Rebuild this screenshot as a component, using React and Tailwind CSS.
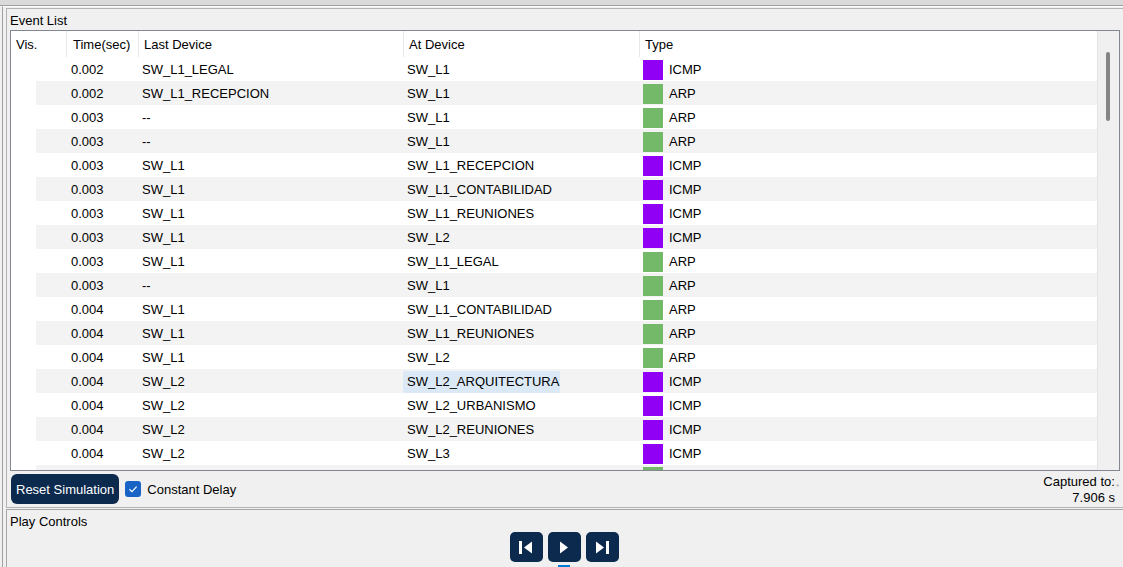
import React from "react";

const rows = [
  ["0.002", "SW_L1_LEGAL", "SW_L1", "ICMP"],
  ["0.002", "SW_L1_RECEPCION", "SW_L1", "ARP"],
  ["0.003", "--", "SW_L1", "ARP"],
  ["0.003", "--", "SW_L1", "ARP"],
  ["0.003", "SW_L1", "SW_L1_RECEPCION", "ICMP"],
  ["0.003", "SW_L1", "SW_L1_CONTABILIDAD", "ICMP"],
  ["0.003", "SW_L1", "SW_L1_REUNIONES", "ICMP"],
  ["0.003", "SW_L1", "SW_L2", "ICMP"],
  ["0.003", "SW_L1", "SW_L1_LEGAL", "ARP"],
  ["0.003", "--", "SW_L1", "ARP"],
  ["0.004", "SW_L1", "SW_L1_CONTABILIDAD", "ARP"],
  ["0.004", "SW_L1", "SW_L1_REUNIONES", "ARP"],
  ["0.004", "SW_L1", "SW_L2", "ARP"],
  ["0.004", "SW_L2", "SW_L2_ARQUITECTURA", "ICMP", true],
  ["0.004", "SW_L2", "SW_L2_URBANISMO", "ICMP"],
  ["0.004", "SW_L2", "SW_L2_REUNIONES", "ICMP"],
  ["0.004", "SW_L2", "SW_L3", "ICMP"],
];

function Row({ r, i }) {
  const [time, last, at, type, hl] = r;
  const striped = i % 2 === 1;
  return (
    <div className="flex h-[24px] shrink-0">
      <div className="w-[25px] h-full bg-white shrink-0" />
      <div className={`flex flex-1 h-full pt-[2px] items-center ${striped ? "bg-[#f3f3f3]" : "bg-white"}`}>
        <div className="w-[30px] shrink-0" />
        <div className="w-[72px] shrink-0 pl-[5px]">{time}</div>
        <div className="w-[265px] shrink-0 pl-[4px]">{last}</div>
        <div className="w-[236px] shrink-0 h-full flex items-center">
          {hl ? (
            <span className="h-[22px] -mt-[1px] pt-[1px] flex items-center pl-[4px] pr-[1px] bg-[#dbe8f5] rounded-[2px]">{at}</span>
          ) : (
            <span className="pl-[4px]">{at}</span>
          )}
        </div>
        <div className="flex-1 flex items-center pl-[4px]">
          <div className={`w-[20px] h-[20px] -mt-[1px] shrink-0 ${type === "ICMP" ? "bg-[#8f00f5]" : "bg-[#74b969]"}`} />
          <span className="ml-[6px]">{type}</span>
        </div>
      </div>
    </div>
  );
}

function CtrlButton({ children }) {
  return (
    <div className="w-[33px] h-[30px] bg-[#0c2a4e] rounded-[5px] flex items-center justify-center">
      {children}
    </div>
  );
}

export default function App() {
  return (
    <div className="w-[1123px] h-[567px] overflow-hidden bg-[#f0f0f0] flex flex-col text-[13px] leading-[16px] text-black font-['Liberation_Sans',Arial,sans-serif]">
      <div className="h-[6px] shrink-0 bg-[#dadada] border-b border-[#a0a0a0]" />
      <div className="flex-1 flex flex-col ml-[2px] border-l border-[#a0a0a0] border-t border-t-[#fbfbfb]">
        {/* Event List panel */}
        <div className="mt-[1px] ml-[3px] flex flex-col border-l border-t border-b border-[#b4b4b4] h-[500px]">
          <div className="h-[21px] pl-[3px] pt-[2px] flex items-center">Event List</div>
          <div className="ml-[3px] mr-[3px] h-[441px] border border-[#828790] bg-white flex">
            <div className="flex-1 flex flex-col overflow-hidden">
              <div className="h-[26px] flex items-center bg-white shrink-0">
                <div className="w-[55px] pl-[5px] pt-[2px] shrink-0">Vis.</div>
                <div className="w-[72px] h-full flex items-center pt-[2px] pl-[6px] border-l border-[#e8e8e8] shrink-0">Time(sec)</div>
                <div className="w-[265px] h-full flex items-center pt-[2px] pl-[5px] border-l border-[#e8e8e8] shrink-0">Last Device</div>
                <div className="w-[236px] h-full flex items-center pt-[2px] pl-[5px] border-l border-[#e8e8e8] shrink-0">At Device</div>
                <div className="flex-1 h-full flex items-center pt-[2px] pl-[5px] border-l border-[#e8e8e8]">Type</div>
              </div>
              {rows.map((r, i) => (
                <Row key={i} r={r} i={i} />
              ))}
              <div className="flex h-[6px] shrink-0">
                <div className="w-[25px] h-full bg-white shrink-0" />
                <div className="flex-1 h-full bg-[#f3f3f3] pl-[607px] pt-[2px]">
                  <div className="w-[20px] h-[4px] bg-[#74b969]" />
                </div>
              </div>
            </div>
            <div className="w-[22px] shrink-0 bg-[#f0f0f0] border-l border-[#e4e4e4] pt-[21px] pl-[8px]">
              <div className="w-[4px] h-[69px] bg-[#858585] rounded-[2px]" />
            </div>
          </div>
          <div className="h-[36px] flex items-center">
            <div className="ml-[4px] h-[30px] pt-[1px] px-[5px] flex items-center bg-[#0c2a4e] text-white rounded-[6px]">Reset Simulation</div>
            <div className="ml-[6px] w-[16px] h-[16px] rounded-[3px] bg-[#1863c6] flex items-center justify-center">
              <svg width="10" height="10" viewBox="0 0 10 10">
                <polyline points="1.5,5.2 4,7.6 8.6,2.6" fill="none" stroke="white" strokeWidth="1.2" />
              </svg>
            </div>
            <div className="ml-[6px] pt-[1px]">Constant Delay</div>
            <div className="ml-auto mr-[4px] pt-[2px] text-right leading-[16px]">
              <div>
                Captured to:<span className="text-[8px] text-[#a0a0a0] leading-none ml-[1px] relative top-[3px]">*</span>
              </div>
              <div className="mr-[4px]">7.906 s</div>
            </div>
          </div>
        </div>
        {/* Play Controls panel */}
        <div className="mt-[1px] ml-[3px] flex-1 flex flex-col border-l border-t border-[#a8a8a8]">
          <div className="h-[22px] pl-[3px] pt-[2px] flex items-center">Play Controls</div>
          <div className="flex justify-center gap-[5px] pr-[2px]">
            <CtrlButton>
              <svg width="14" height="14" viewBox="0 0 14 14">
                <rect x="0" y="1" width="3" height="13" fill="white" />
                <polygon points="13,1.5 5,7.5 13,13.5" fill="white" />
              </svg>
            </CtrlButton>
            <div className="flex flex-col items-center">
              <CtrlButton>
                <svg width="10" height="14" viewBox="0 0 10 14">
                  <polygon points="1,1.5 9,7.5 1,13.5" fill="white" />
                </svg>
              </CtrlButton>
              <div className="mt-[3px] w-[12px] h-[3px] bg-[#0078d7]" />
            </div>
            <CtrlButton>
              <svg width="14" height="14" viewBox="0 0 14 14">
                <polygon points="1,1.5 9,7.5 1,13.5" fill="white" />
                <rect x="11" y="1" width="3" height="13" fill="white" />
              </svg>
            </CtrlButton>
          </div>
        </div>
      </div>
    </div>
  );
}
